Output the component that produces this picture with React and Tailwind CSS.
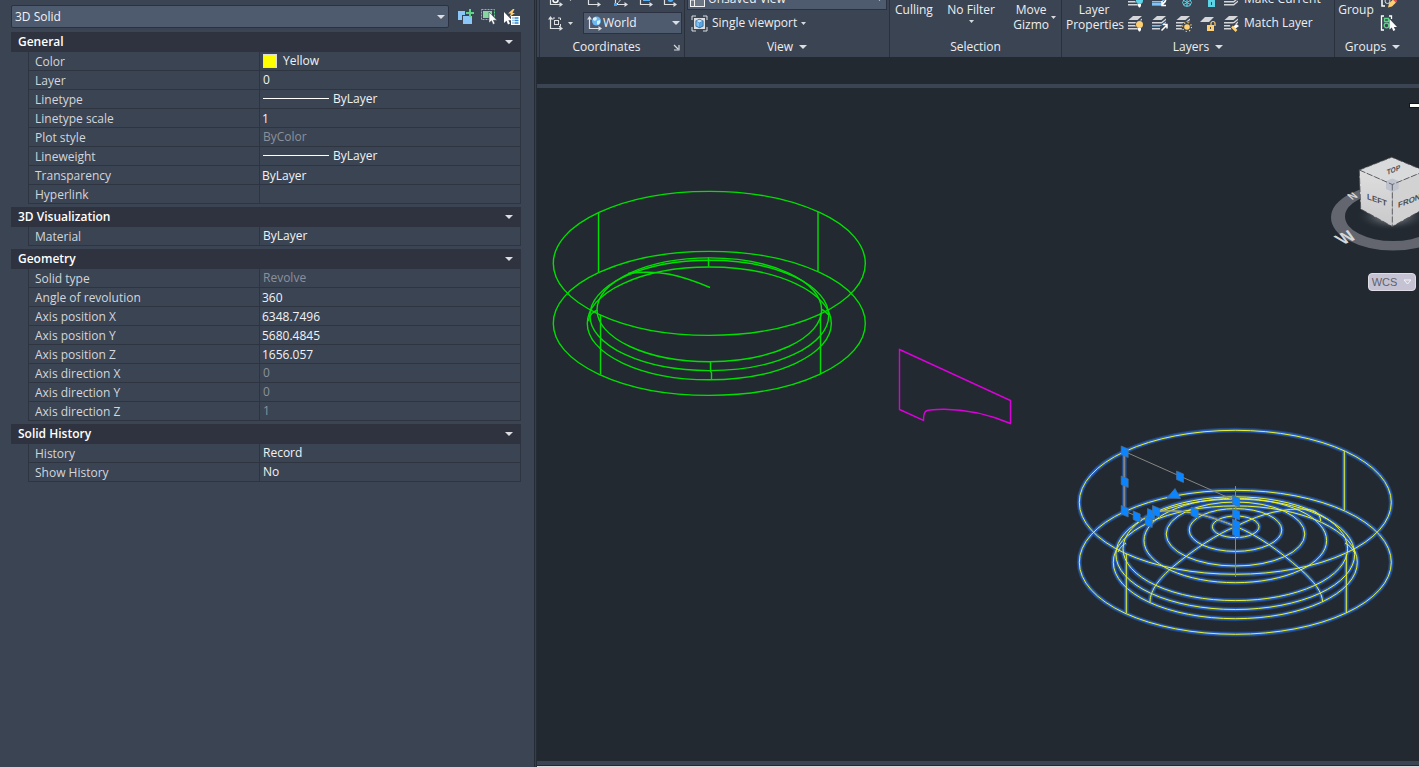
import React from 'react';

const sections = [
  {
    title: 'General',
    rows: [
      { label: 'Color', value: 'Yellow', kind: 'swatch' },
      { label: 'Layer', value: '0' },
      { label: 'Linetype', value: 'ByLayer', kind: 'line' },
      { label: 'Linetype scale', value: '1', kind: 'input' },
      { label: 'Plot style', value: 'ByColor', muted: true },
      { label: 'Lineweight', value: 'ByLayer', kind: 'line' },
      { label: 'Transparency', value: 'ByLayer', kind: 'input' },
      { label: 'Hyperlink', value: '', kind: 'input' },
    ],
  },
  {
    title: '3D Visualization',
    rows: [{ label: 'Material', value: 'ByLayer' }],
  },
  {
    title: 'Geometry',
    rows: [
      { label: 'Solid type', value: 'Revolve', muted: true },
      { label: 'Angle of revolution', value: '360', kind: 'input' },
      { label: 'Axis position X', value: '6348.7496', kind: 'input' },
      { label: 'Axis position Y', value: '5680.4845', kind: 'input' },
      { label: 'Axis position Z', value: '1656.057', kind: 'input' },
      { label: 'Axis direction X', value: '0', muted: true },
      { label: 'Axis direction Y', value: '0', muted: true },
      { label: 'Axis direction Z', value: '1', muted: true },
    ],
  },
  {
    title: 'Solid History',
    rows: [
      { label: 'History', value: 'Record' },
      { label: 'Show History', value: 'No' },
    ],
  },
];

const Caret = ({ small }) =>
  small ? (
    <svg width="5" height="3" viewBox="0 0 5 3" className="shrink-0">
      <path d="M0 0h5L2.5 3z" fill="#d8dade" />
    </svg>
  ) : (
    <svg width="8" height="4" viewBox="0 0 8 4" className="shrink-0">
      <path d="M0 0h8L4 4z" fill="#dcdee2" />
    </svg>
  );

/* ---------- properties palette ---------- */

const PickAddIcon = () => (
  <svg width="18" height="18" viewBox="0 0 18 18">
    <path d="M1 3h7v4H5v5H1z" fill="#8ac6f8" />
    <path d="M6 8h9v8H6z" fill="#8ac6f8" />
    <path d="M12 1h2v3h3v2h-3v3h-2V6H9V4h3z" fill="#5fd38a" />
  </svg>
);

const SelectObjectsIcon = () => (
  <svg width="18" height="18" viewBox="0 0 18 18">
    <rect x="1.5" y="1.5" width="13" height="10" fill="none" stroke="#5fd38a" strokeDasharray="2 1" />
    <rect x="3" y="3" width="9" height="7" fill="#86d6a2" />
    <path d="M9 4v11l2.500-2.200L13 16.500l2-.9-1.600-3.300H17z" fill="#fff" stroke="#3b4453" strokeWidth=".6" />
  </svg>
);

const QuickSelectIcon = () => (
  <svg width="18" height="18" viewBox="0 0 18 18">
    <path d="M1 4v11l2.500-2.200L5 16.500l2-.9-1.600-3.300H9z" fill="#fff" />
    <path d="M10 1L5 5.500h3L6.500 9 12 5H9.500l2-4z" fill="#ffcf70" />
    <rect x="8" y="8" width="9" height="9" fill="#fff" />
    <path d="M9.500 10h1m1 0h4M9.500 12.500h1m1 0h4M9.500 15h1m1 0h4" stroke="#2b84d6" strokeWidth="1.300" />
  </svg>
);

const PropertyValue = ({ row, id }) => {
  if (row.kind === 'input') {
    return (
      <input
        id={id}
        defaultValue={row.value}
        className="block h-[18px] w-full bg-transparent pt-px pl-0.5 text-[#f1f2f4] outline-none"
      />
    );
  }
  return (
    <span
      className={`flex h-[18px] items-center pb-px pl-[3px] ${row.muted ? 'text-[#8b919b]' : 'text-[#f1f2f4]'}`}
    >
      {row.kind === 'swatch' && <span className="mr-1.5 size-3.5 border border-[#dcdcdc] bg-[#ffff00]" />}
      {row.kind === 'line' && <span className="mr-1 h-px w-[66px] bg-white" />}
      {row.value}
    </span>
  );
};

const PropertySection = ({ section }) => (
  <section className="mb-[3px]">
    <button className="flex h-5 w-full items-center justify-between bg-[#2e333f] pr-2 pl-[7px] font-semibold text-white">
      {section.title}
      <Caret />
    </button>
    <div className="pl-[17px]">
      <table className="w-full table-fixed border-separate border-spacing-0 border-x border-[#2e3541]">
        <tbody>
          {section.rows.map((row) => {
            const id = row.label.toLowerCase().replace(/ /g, '-');
            return (
              <tr key={row.label}>
                <th
                  scope="row"
                  className="h-[19px] w-[230px] border-b border-[#2e3541] p-0 pl-1.5 text-left font-normal text-[#d3d6db]"
                >
                  <span className="block h-[18px] pt-px">
                    {row.kind === 'input' ? <label htmlFor={id}>{row.label}</label> : row.label}
                  </span>
                </th>
                <td className="h-[19px] border-b border-l border-[#2e3541] p-0">
                  <PropertyValue row={row} id={id} />
                </td>
              </tr>
            );
          })}
        </tbody>
      </table>
    </div>
  </section>
);

const PropertiesPanel = () => (
  <aside className="w-[534px] shrink-0 pt-[5px] pr-[13px] pl-[11px] leading-[18px]">
    <div className="mb-1 flex items-center">
      <div className="flex h-[23px] flex-1 items-center rounded-xs border border-[#2b3140] bg-[#4e5a6e] pr-[3px] pl-[3px]">
        <select aria-label="Object type" className="flex-1 appearance-none bg-transparent text-[#f1f2f4] outline-none">
          <option>3D Solid</option>
        </select>
        <Caret />
      </div>
      <div className="flex gap-[5px] pl-2">
        <button aria-label="Toggle pick add"><PickAddIcon /></button>
        <button aria-label="Select objects"><SelectObjectsIcon /></button>
        <button aria-label="Quick select"><QuickSelectIcon /></button>
      </div>
    </div>
    {sections.map((section) => (
      <PropertySection key={section.title} section={section} />
    ))}
  </aside>
);

/* ---------- ribbon ---------- */

const Ucs = ({ children }) => (
  <svg width="17" height="17" viewBox="0 0 17 17" className="shrink-0">
    <path d="M3.500 3v10.500H14" fill="none" stroke="#dcdee2" strokeWidth="1.200" />
    <path d="M1 4.500L3.500 1 6 4.500zM12.500 11l3.500 2.500-3.500 2.500z" fill="#dcdee2" />
    {children}
  </svg>
);

const Stack = ({ accent = '#d4d6da', children }) => (
  <svg width="17" height="17" viewBox="0 0 17 17" className="shrink-0">
    <path d="M6 1h9l-4.500 4H1.500z" fill="#d4d6da" />
    <path d="M1 7h9.500L15 3.500V5L11 8.500H1z" fill="#d4d6da" />
    <path d="M1 10h9.500L15 6.500V8L11 11.500H1z" fill={accent} />
    <path d="M1 13h9.500L15 9.500V11l-4 3.500H1z" fill="#d4d6da" />
    {children}
  </svg>
);

const Bulb = ({ color }) => (
  <g>
    <circle cx="12.500" cy="9.500" r="4.200" fill="#3b4453" />
    <circle cx="12.500" cy="9.500" r="3.500" fill={color} />
    <path d="M11 13h3v2l-1 1.500h-1L11 15z" fill="#fff" />
  </g>
);

const ViewportIcon = () => (
  <svg width="17" height="17" viewBox="0 0 17 17">
    <path d="M1 5V1h4M12 1h4v4M16 12v4h-4M5 16H1v-4" fill="none" stroke="#dcdee2" />
    <rect x="3" y="3" width="11" height="11" fill="#dcdee2" />
    <path d="M8.500 3.800l4 2v5.400l-4 2-4-2V5.800z" fill="#2b5f94" />
    <path d="M8.500 4.500l3.200 1.600-3.200 1.600-3.200-1.600z" fill="#bfe2fb" />
    <path d="M5.300 6.300l3.200 1.600v4.500l-3.200-1.600z" fill="#7cc0f5" />
    <path d="M11.700 6.300L8.500 7.900v4.500l3.200-1.600z" fill="#5aa5e2" />
  </svg>
);

const RibbonGroup = ({ title, caret, launcher, className, children }) => (
  <section className={`flex shrink-0 flex-col justify-end border-l border-[#2a303c] ${className}`}>
    <div className="flex shrink-0 items-end pb-0.5">{children}</div>
    <div className="flex h-5 shrink-0 items-center justify-center">
      <span className="flex flex-1 items-center justify-center gap-1.5">
        {title}
        {caret && <Caret />}
      </span>
      {launcher && (
        <button aria-label="Coordinates settings" className="pr-1">
          <svg width="7" height="7" viewBox="0 0 7 7">
            <path d="M1 1l4 4M6 1v5H1" fill="none" stroke="#d8dade" strokeWidth="1.200" />
          </svg>
        </button>
      )}
    </div>
  </section>
);

const CoordinatesGroup = () => (
  <RibbonGroup title="Coordinates" launcher className="w-[145px]">
    <div className="w-full pl-[7px]">
      <div className="flex h-6 items-center">
        <button aria-label="UCS origin" className="mr-1"><Ucs><circle cx="8.500" cy="9" r="2.500" fill="none" stroke="#fff" strokeWidth="1.500" /></Ucs></button>
        <Caret small />
        <button aria-label="UCS" className="ml-3"><Ucs /></button>
        <button aria-label="UCS 3 point" className="ml-2.5"><Ucs><path d="M5 13l6-7" stroke="#fff" strokeDasharray="2 1" /><path d="M2 12h3v3H2z" fill="#4ba3ee" /></Ucs></button>
        <button aria-label="UCS view" className="ml-2"><Ucs><rect x="6" y="5" width="7" height="5" fill="#5ab0f0" /></Ucs></button>
        <button aria-label="UCS object" className="ml-[7px]"><Ucs><circle cx="9.500" cy="8" r="3" fill="#5ab0f0" /></Ucs></button>
      </div>
      <div className="flex h-6 items-center">
        <button aria-label="UCS icon" className="flex items-center gap-1">
          <Ucs>
            <rect x="7.500" y="5.500" width="4" height="4" fill="none" stroke="#dcdee2" />
            <path d="M6 4.500V3h2M11 3h2.500v2M13.500 9v2.500H12" fill="none" stroke="#dcdee2" />
          </Ucs>
          <Caret small />
        </button>
        <div className="ml-2.5 flex h-[22px] w-[99px] items-center border border-[#2b3140] bg-[#4e5a6e] pr-px pl-0.5">
          <Ucs>
            <circle cx="10.500" cy="6" r="4.500" fill="#6ab8f2" />
            <path d="M7 3l3-1 1 2-2 2-2-1zM11 6l3-1v3l-2 2-1-1z" fill="#d8effd" />
          </Ucs>
          <select aria-label="UCS name" className="w-14 flex-1 appearance-none bg-transparent text-[#f1f2f4] outline-none">
            <option>World</option>
          </select>
          <Caret />
        </div>
      </div>
    </div>
  </RibbonGroup>
);

const ViewGroup = () => (
  <RibbonGroup title="View" caret className="w-[205px]">
    <div className="w-full pr-0.5 pl-0.5">
      <div className="flex h-6 items-center">
        <div className="flex h-[22px] flex-1 items-center gap-[3px] border border-[#2b3140] bg-[#4e5a6e] pr-1 pl-0.5">
          <svg width="15" height="15" viewBox="0 0 15 15">
            <path d="M0 0h15v15H0z" fill="#f1f2f4" />
            <path d="M1 1h3v13H1zM5 1h9v13H5z" fill="#6c7584" />
            <path d="M1 8h3" stroke="#f1f2f4" />
          </svg>
          <select aria-label="View name" className="flex-1 appearance-none bg-transparent text-[#f1f2f4] outline-none">
            <option>Unsaved View</option>
          </select>
          <Caret small />
        </div>
      </div>
      <button className="flex h-6 items-center gap-1 pl-1">
        <ViewportIcon />
        Single viewport
        <Caret small />
      </button>
    </div>
  </RibbonGroup>
);

const SelectionGroup = () => (
  <RibbonGroup title="Selection" className="w-[172px]">
    <div className="flex w-full justify-between pr-[5px] pb-[3px] pl-[5px] leading-[15px]">
      <button className="flex h-[30px] flex-col items-center">Culling</button>
      <button className="mr-1 flex h-[30px] flex-col items-center gap-[3px]">
        No Filter
        <Caret small />
      </button>
      <button className="flex h-[30px] items-center gap-0.5">
        <span>Move<br />Gizmo</span>
        <Caret small />
      </button>
    </div>
  </RibbonGroup>
);

const LayersGroup = () => (
  <RibbonGroup title="Layers" caret className="w-[273px]">
    <button className="mb-[3px] ml-1 h-[30px] w-[56px] shrink-0 text-center leading-[15px]">
      Layer<br />Properties
    </button>
    <div className="pl-[5px]">
      <div className="flex h-6 items-center gap-[7px]">
        <button aria-label="Layer off"><Stack><Bulb color="#5fd3e6" /></Stack></button>
        <button aria-label="Layer isolate">
          <Stack accent="#7cc4fa"><path d="M1 13h9.500" stroke="#7cc4fa" strokeWidth="2" /><path d="M15 9l-4 5m0-4v4.500h4" stroke="#fff" fill="none" strokeWidth="1.500" /></Stack>
        </button>
        <button aria-label="Layer freeze">
          <Stack>
            <path d="M0 5h17v12H0z" fill="#3b4453" />
            <path d="M12 7v9M8 9l8 5M16 9l-8 5M9.500 8l5 0 2 3.500-2 3.500h-5l-2-3.500z" stroke="#5fd3e6" fill="none" />
          </Stack>
        </button>
        <button aria-label="Layer lock">
          <svg width="17" height="17" viewBox="0 0 17 17">
            <path d="M6 1h9l-4.500 5H1.500z" fill="#d4d6da" />
            <path d="M10 10V8a2.500 2.500 0 015 0v2" stroke="#5fd3e6" fill="none" strokeWidth="1.500" />
            <path d="M9 9h7v7H9z" fill="#5fd3e6" />
            <path d="M12 11h1v3h-1z" fill="#3b4453" />
          </svg>
        </button>
        <button className="flex items-center gap-1"><Stack />Make Current</button>
      </div>
      <div className="flex h-6 items-center gap-[7px]">
        <button aria-label="Turn all layers on"><Stack><Bulb color="#ffcf70" /></Stack></button>
        <button aria-label="Layer unisolate">
          <Stack accent="#7cc4fa">
            <path d="M9 17V11l8-3v9z" fill="#3b4453" />
            <path d="M10.500 15.500l5-5M12 9.500h4v4" stroke="#fff" fill="none" strokeWidth="1.500" />
          </Stack>
        </button>
        <button aria-label="Thaw all layers">
          <Stack>
            <circle cx="12" cy="12" r="5.500" fill="#3b4453" />
            <circle cx="12" cy="12" r="2.800" fill="#ffcf70" />
            <circle cx="12" cy="12" r="4.500" fill="none" stroke="#ffcf70" strokeWidth="1.200" strokeDasharray="1.200 2.334" />
          </Stack>
        </button>
        <button aria-label="Unlock layer">
          <svg width="17" height="17" viewBox="0 0 17 17">
            <path d="M6 2h9l-5 5H1z" fill="#d4d6da" />
            <path d="M12 10V8.500a2 2 0 014 0V11" stroke="#ffcf70" fill="none" strokeWidth="1.200" />
            <path d="M8 10h7v6H8z" fill="#ffcf70" />
            <path d="M11 12h1v2h-1z" fill="#3b4453" />
          </svg>
        </button>
        <button className="flex items-center gap-1">
          <Stack>
            <path d="M7 10l5-2 5 5v4H9z" fill="#3b4453" />
            <path d="M13 9l3 2-4 3-2-2z" fill="#fff" />
            <path d="M9 11.500l4.500 4.500" stroke="#ffcf70" strokeWidth="2.500" />
          </Stack>
          Match Layer
        </button>
      </div>
    </div>
  </RibbonGroup>
);

const GroupsGroup = () => (
  <RibbonGroup title="Groups" caret className="w-[76px]">
    <button className="mb-[3px] ml-1 flex h-[30px] w-[34px] justify-center leading-[15px]">Group</button>
    <div className="pl-[7px]">
      <div className="flex h-6 items-center">
        <button aria-label="Group edit">
          <svg width="17" height="17" viewBox="0 0 17 17">
            <path d="M5 1H2v14h3M12 1h3v3" fill="none" stroke="#fff" strokeWidth="1.500" />
            <circle cx="7.500" cy="10" r="2.500" fill="none" stroke="#dcdee2" />
            <path d="M8 16.500l1-4 4-4 3 3-4 4z" fill="#ffcf70" />
            <path d="M13 8.500l1.500-1.500 3 3-1.500 1.500z" fill="#ef5350" />
          </svg>
        </button>
      </div>
      <div className="flex h-6 items-center">
        <button aria-label="Group selection">
          <svg width="17" height="17" viewBox="0 0 17 17">
            <path d="M4 1H1.500v14H4M9 1h2.500v3" fill="none" stroke="#fff" strokeWidth="1.300" />
            <path d="M4.500 3.500h4v3h-4z" fill="none" stroke="#5fd38a" strokeWidth="1.300" />
            <circle cx="6.500" cy="10.500" r="2.300" fill="none" stroke="#5fd38a" strokeWidth="1.300" />
            <path d="M9.500 4v10.500l2.300-2 1.500 3.500 2-.9-1.500-3.200H17z" fill="#fff" />
          </svg>
        </button>
      </div>
    </div>
  </RibbonGroup>
);

const Ribbon = () => (
  <header className="flex h-[57px] shrink-0 items-stretch overflow-hidden bg-[#3b4453] pl-0.5 text-[#eceef0]">
    <CoordinatesGroup />
    <ViewGroup />
    <SelectionGroup />
    <LayersGroup />
    <GroupsGroup />
  </header>
);

/* ---------- model space ---------- */

// cy and radii of the rings every revolved solid is made of
const rings = [
  [0, 156, 72],
  [60, 156, 72],
  [60, 122, 56.4],
  [52, 119.4, 55.2],
  [46.4, 112.3, 51.9],
];

const Rings = ({ cx, cy }) =>
  rings.map(([dy, rx, ry], i) => <ellipse key={i} cx={cx} cy={cy + dy} rx={rx} ry={ry} />);

const SolidWires = () => (
  <g>
    <Rings cx={1235.3} cy={502.3} />
    <ellipse cx="1235.700" cy="526.800" rx="23.300" ry="10.800" />
    <ellipse cx="1235.500" cy="530" rx="46.300" ry="21.400" />
    <ellipse cx="1235.500" cy="534" rx="69.300" ry="32" />
    <ellipse cx="1235.300" cy="540.500" rx="91.300" ry="42.200" />
    <path d="M1124.300 451v60M1344.300 451v59M1126.300 554v59M1346.300 554v59" />
    <path d="M1235.700 526.500C1217 534 1195 549 1177 563.500C1160 577 1150 590 1150 602" />
    <path d="M1235.700 526.500C1256 534 1281 552 1300 569C1315 582 1322 592 1322.700 602" />
    <path d="M1235.700 526.500C1252 518 1275 509 1300 509C1314 509 1320 512 1320.700 521" />
    <path d="M1235.700 526.500C1215 518 1190 509 1160 511" />
    <path d="M1118 552c2-5 5-7 8-9M1345 543c4 2 7 5 9 9" />
  </g>
);

const grips = [
  [1124.7, 451.5], [1124.7, 481.5], [1124.7, 511], [1180, 476.5], [1136.7, 516.5],
  [1151, 514], [1156, 511], [1148.7, 521.5], [1194.7, 512.5],
  [1236, 501], [1236, 514], [1236, 524.5], [1236, 531.5],
];

const Drawing = () => (
  <svg className="absolute inset-0 h-full w-full" role="img" aria-label="Model space">
    <g transform="translate(-537 -88)" fill="none">
      <g stroke="#00e000" strokeWidth="1.400">
        <Rings cx={709.3} cy={263.4} />
        <path d="M598.500 213v59M818 212v59M600.500 315v59.500M820.500 313v61" />
        <path d="M708.500 257.500v9M710.500 362v9l1 2v7" />
        <path d="M628 273.500C660 269.500 680 275 710 287.500" />
        <path d="M588 321c2-7 5-9 9.500-11M821.500 309.500c3 1 5 3 7.500 6" />
      </g>

      <path
        d="M899.500 349.500L1010.500 400.500V423.500C985 413 960 407 930 410C925 410 923.500 413 923.500 420.500L899.500 409.500Z"
        stroke="#dc00dc"
        strokeWidth="1.400"
      />

      <g stroke="#2463c8" strokeWidth="5" opacity=".5"><SolidWires /></g>
      <g stroke="#2a66d0" strokeWidth="3" opacity=".8"><SolidWires /></g>
      <g stroke="#e8f032" strokeWidth="1"><SolidWires /></g>

      <path
        d="M1124.500 451.500L1236 501V528C1225 521 1200 512 1180 511H1158C1150 511 1149 515 1149 521.500L1124.500 511Z"
        stroke="#868686"
      />
      <path d="M1235.500 486v91" stroke="#868686" />
      {grips.map(([x, y], i) => (
        <path key={i} d={`M${x - 3.5} ${y - 5.5}l7 3v8.500l-7-3z`} fill="#0a84ff" stroke="#4f7294" strokeWidth=".7" />
      ))}
      <path d="M1175 488.500l5.500 10-13.500-.5z" fill="#0a84ff" stroke="#4f7294" strokeWidth=".7" />
    </g>
  </svg>
);

const ViewCube = () => (
  <svg width="90" height="115" viewBox="1329 150 90 115" className="block">
    <defs>
      <linearGradient id="left-face" x1="0" y1="0" x2="0" y2="1">
        <stop offset="0" stopColor="#dededf" />
        <stop offset="1" stopColor="#c9c9cb" />
      </linearGradient>
      <radialGradient id="cube-shadow">
        <stop offset=".4" stopColor="#5a5f66" />
        <stop offset="1" stopColor="#222930" stopOpacity="0" />
      </radialGradient>
    </defs>
    <path
      fillRule="evenodd"
      fill="#63666f"
      d="M1331 217.500a62 33 0 1 0 124 0a62 33 0 1 0-124 0zM1345 216.500a48 24.500 0 1 0 96 0a48 24.500 0 1 0-96 0z"
    />
    <ellipse cx="1392" cy="216" rx="36" ry="15" fill="url(#cube-shadow)" />
    <path d="M1359.300 170L1391.700 157.200L1425 171L1392.300 184.500Z" fill="#d9dadb" />
    <path d="M1359.300 170L1392.300 184.500V226.500L1360.700 209Z" fill="url(#left-face)" />
    <path d="M1392.300 184.500L1425 171L1423.700 209L1392.300 226.500Z" fill="#d2d2d3" />
    <path d="M1386 181l6.300-2.500 6.300 2.500v8l-6.300 3-6.300-3z" fill="#bfc3cf" />
    <path
      d="M1359.300 170L1391.700 157.200L1425 171L1392.300 184.500ZM1392.300 184.500V226.500M1359.300 170L1360.700 209L1392.300 226.500L1423.700 209"
      fill="none"
      stroke="#4a4c50"
      strokeDasharray="6 2"
      strokeWidth=".8"
    />
    <g fill="#4c4f55" className="font-['Liberation_Sans',sans-serif] font-bold">
      <text transform="translate(1367 199) skewY(20)" fontSize="8">LEFT</text>
      <text transform="translate(1398 208) skewY(-22)" fontSize="8">FRONT</text>
      <text transform="translate(1387 175) rotate(-22) skewX(-20)" fontSize="7">TOP</text>
    </g>
    <g fill="#d5d7d8" className="font-['Liberation_Sans',sans-serif] font-bold">
      <text transform="translate(1343 245) rotate(-24) skewX(25)" fontSize="17">W</text>
      <text transform="translate(1352 200) rotate(-24) skewX(25)" fontSize="10">N</text>
    </g>
  </svg>
);

const Viewport = () => (
  <main className="relative flex-1 overflow-hidden bg-[#222930]">
    <Drawing />
    <div className="absolute top-[15px] right-0 flex flex-col items-end">
      <button aria-label="Minimize viewport" className="mb-[42px] h-[5px] w-2.5 border border-r-0 border-[#101418] bg-white" />
      <ViewCube />
      <button className="mt-2 mr-[3px] flex h-[18px] w-12 items-center justify-center gap-1.5 rounded-sm border border-[#dedde6] bg-[#c5c3d3] font-['Liberation_Sans',sans-serif] text-[11px] text-[#60616d]">
        WCS
        <svg width="9" height="6" viewBox="0 0 9 6">
          <path d="M1 1h7L4.500 5z" fill="none" stroke="#f3f2f8" />
        </svg>
      </button>
    </div>
  </main>
);

const App = () => (
  <div className="flex h-screen overflow-hidden bg-[#3b4453] font-['Open_Sans','Noto_Sans',sans-serif] text-[12px] leading-4">
    <PropertiesPanel />
    <div className="w-[3px] shrink-0 border-x border-[#262c36] bg-[#363e4b]" />
    <div className="flex min-w-0 flex-1 flex-col bg-[#222930]">
      <Ribbon />
      <div className="h-[27px] shrink-0" />
      <div className="h-1 shrink-0 bg-[#3b4453]" />
      <Viewport />
      <div className="h-1 shrink-0 bg-[#3b4453]" />
      <div className="h-0.5 shrink-0 border-b border-[#d8d8d8]" />
    </div>
  </div>
);

export default App;
